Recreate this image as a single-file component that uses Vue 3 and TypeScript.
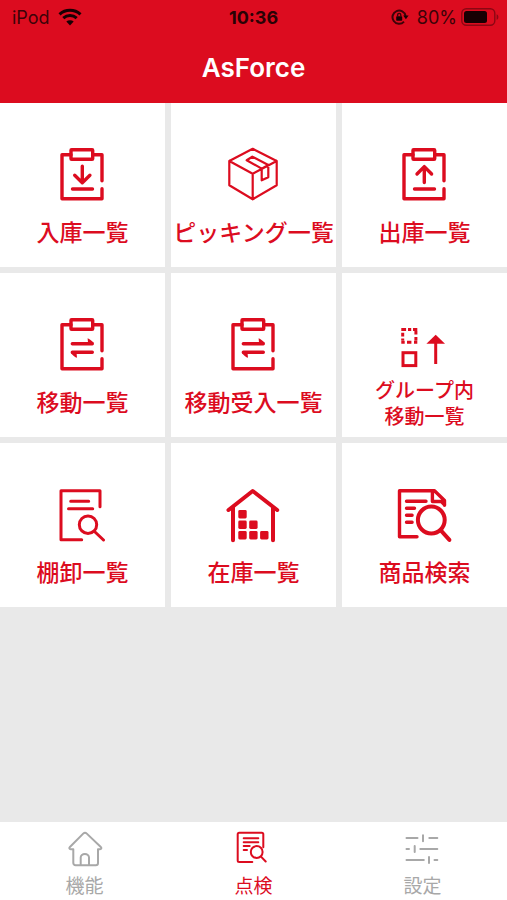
<script setup lang="ts">
import { ref } from 'vue'

type IconName = 'in' | 'box' | 'out' | 'move' | 'group' | 'stocktake' | 'warehouse' | 'product'
type TabName = 'home' | 'inspect' | 'settings'

interface Tile {
  icon: IconName
  lines: string[]
}

interface Tab {
  id: TabName
  label: string
}

const tiles: Tile[] = [
  { icon: 'in', lines: ['入庫一覧'] },
  { icon: 'box', lines: ['ピッキング一覧'] },
  { icon: 'out', lines: ['出庫一覧'] },
  { icon: 'move', lines: ['移動一覧'] },
  { icon: 'move', lines: ['移動受入一覧'] },
  { icon: 'group', lines: ['グループ内', '移動一覧'] },
  { icon: 'stocktake', lines: ['棚卸一覧'] },
  { icon: 'warehouse', lines: ['在庫一覧'] },
  { icon: 'product', lines: ['商品検索'] },
]

const tabs: Tab[] = [
  { id: 'home', label: '機能' },
  { id: 'inspect', label: '点検' },
  { id: 'settings', label: '設定' },
]

const activeTab = ref<TabName>('inspect')

const isClipboard = (icon: IconName): boolean => icon === 'in' || icon === 'out' || icon === 'move'
</script>

<template>
  <div class="app">
    <header class="header">
      <div class="status">
        <div class="status-side">
          <span>iPod</span>
          <svg class="wifi" viewBox="0 0 24 18" aria-hidden="true">
            <path d="M1.5 6.4a15.5 15.5 0 0 1 21 0" />
            <path d="M5.3 10.2a10 10 0 0 1 13.4 0" />
            <path class="solid" d="M12 17.4l-3.7-3.8a5.4 5.4 0 0 1 7.4 0z" />
          </svg>
        </div>
        <span class="time">10:36</span>
        <div class="status-side status-right">
          <svg class="lock" viewBox="0 0 18 18" aria-hidden="true">
            <path d="M13 13.600A6.600 6.600 0 1 1 14.600 8" />
            <path class="solid" d="M12.200 7.600h5.400l-2.700 3.600z" />
            <rect class="solid" x="5.2" y="8.2" width="6" height="4.6" rx="0.8" />
            <path class="shackle" d="M6.600 8.400V7a1.600 1.600 0 0 1 3.200 0v1.400" />
          </svg>
          <span class="percent">80%</span>
          <svg class="battery" viewBox="0 0 38 18" aria-hidden="true">
            <rect class="case" x="0.8" y="0.8" width="33" height="16.4" rx="4.5" />
            <rect class="solid" x="3" y="3" width="23" height="12" rx="2.5" />
            <path class="nub" d="M35.6 6.2c2.4.8 2.4 4.8 0 5.6z" />
          </svg>
        </div>
      </div>
      <h1 class="title">AsForce</h1>
    </header>

    <main class="content">
      <div class="grid">
        <button
          v-for="tile in tiles"
          :key="tile.lines.join('')"
          type="button"
          class="tile"
        >
          <svg class="tile-icon" viewBox="0 0 57 57" aria-hidden="true">
            <g v-if="isClipboard(tile.icon)">
              <path d="M17 8.7H8v44h40v-10M48 34.7v-26h-9.3" />
              <rect x="17" y="3.7" width="21.7" height="9.6" rx="0.6" />
            </g>
            <path
              v-if="tile.icon === 'in'"
              d="M28.3 20.3v16.2M20.7 29.3l7.6 7.4 7.6-7.4M18.5 43h20"
            />
            <path
              v-else-if="tile.icon === 'out'"
              d="M28.3 36.5V20.6M21 28l7.3-7.4 7.3 7.4M18.5 43h20"
            />
            <g v-else-if="tile.icon === 'move'">
              <path d="M18.3 27.7h20M18.3 36.3h20" />
              <path class="solid" d="M33.6 22.2c1.8.4 4.8 3.1 6 4.6l-1.4 1.8h-4z" />
              <path class="solid" d="M23 41.8c-1.8-.4-4.8-3.1-6-4.6l1.4-1.8h4z" />
            </g>
            <path
              v-else-if="tile.icon === 'box'"
              class="thin"
              d="M27.7 2.8l24 12.2v24.3l-24 14-23.4-14V15zM4.3 15l23.4 12.7L51.7 15M27.7 27.7v25.6M36.7 22.6l-15-8.3 5.6-3.6 16 8.2v12.3l-6.6 3.1V22.6l6.6-3.7"
            />
            <g v-else-if="tile.icon === 'group'" class="square">
              <path
                d="M5.3 13.4h4.8M12 13.4h3.2M17 13.4h4.3M5.3 26.2h3.4M11 26.2h4.4M18 26.2h3.3M6.7 16.8v3.6M6.7 22.4v2M19.9 15v3.6M19.9 21v3.4"
              />
              <rect x="7" y="36.7" width="12.8" height="12.9" />
              <path d="M39.7 48V26" />
              <path class="head" d="M39.7 18.7l9.3 9H30.4z" />
            </g>
            <g v-else-if="tile.icon === 'stocktake'" class="medium">
              <path d="M27.7 53.7H7v-49h39v16M16.7 15.3h18M14.5 22.7h24.2M40.5 45.5l9 8.5" />
              <circle cx="34" cy="38.7" r="8.7" />
            </g>
            <g v-else-if="tile.icon === 'warehouse'">
              <path class="bold" d="M3.5 24L27.7 5l24.5 19M8 21.5v32.8M48 21.5v32.8" />
              <g class="solid">
                <rect x="13.3" y="24" width="8.4" height="8.4" rx="1.4" />
                <rect x="13.3" y="34.5" width="8.4" height="8.4" rx="1.4" />
                <rect x="24.2" y="34.5" width="8.4" height="8.4" rx="1.4" />
                <rect x="13.3" y="45" width="8.4" height="8.4" rx="1.4" />
                <rect x="24.2" y="45" width="8.4" height="8.4" rx="1.4" />
                <rect x="35.1" y="45" width="8.4" height="8.4" rx="1.4" />
              </g>
            </g>
            <g v-else>
              <path
                d="M21 50.7H3.5v-46h35l10 9.8v4.8M36.4 5.5v10h9l3.1 3.4M10.5 15.3h19.5M10.5 22.3h8M10.5 29.3h5.6M10.5 36.3h5.6"
              />
              <circle class="bold" cx="35.3" cy="34" r="13.4" />
              <path class="bold" d="M44.8 44.3l8.6 9.6" />
            </g>
          </svg>
          <span class="tile-label" :class="{ stacked: tile.lines.length > 1 }">
            <span v-for="line in tile.lines" :key="line" class="line">{{ line }}</span>
          </span>
        </button>
      </div>
    </main>

    <nav class="tabs">
      <button
        v-for="tab in tabs"
        :key="tab.id"
        type="button"
        class="tab"
        :class="{ active: tab.id === activeTab }"
        @click="activeTab = tab.id"
      >
        <svg class="tab-icon" viewBox="0 0 37 37" aria-hidden="true">
          <path
            v-if="tab.id === 'home'"
            d="M17.2 3.6a2.6 2.6 0 0 1 3.6 0L34.8 17c1 1 .6 2.2-.8 2.2h-2V33a2.2 2.2 0 0 1-2.2 2.2H9.5A2.2 2.2 0 0 1 7.3 33V19.2H4.7c-1.4 0-1.8-1.2-.8-2.2zM14.7 35v-7.500a4.150 3.500 0 0 1 8.300 0V35"
          />
          <g v-else-if="tab.id === 'inspect'">
            <path
              d="M17.3 32H4.2a1.5 1.5 0 0 1-1.5-1.5V4.2a1.5 1.5 0 0 1 1.5-1.5h22.6a1.5 1.5 0 0 1 1.5 1.5v13M8.7 8.3h14.6M8.7 12.2h14.6M8.7 16.1h6M8.7 20h3.3M26 26.6l4.7 4.9"
            />
            <circle cx="21.7" cy="22" r="5.9" />
          </g>
          <path
            v-else
            d="M2.5 8h11M25.3 8h8M19 5.3v6M2.5 19H5M16.3 19h17M10.7 16v6M2.5 30h17.3M30.5 30h2.8M25 27v6"
          />
        </svg>
        <span class="tab-label">{{ tab.label }}</span>
      </button>
    </nav>
  </div>
</template>

<style>
body {
  margin: 0;
}
</style>

<style scoped>
.app {
  display: flex;
  flex-direction: column;
  min-height: 100vh;
  background: #e9e9e9;
  color: #dc0c1f;
  font-family: Inter, 'Noto Sans CJK JP', sans-serif;
}

.header {
  background: #dc0c1f;
}

.status {
  display: grid;
  grid-template-columns: 1fr auto 1fr;
  align-items: center;
  height: 34px;
  color: #3c0308;
  font-size: 18px;
}

.status-side {
  display: flex;
  align-items: center;
  gap: 8px;
  padding-left: 12px;
}

.status-right {
  justify-content: flex-end;
  padding: 0 8px 0 0;
}

.status svg {
  fill: none;
  stroke: #180003;
}

.status svg .solid {
  fill: #180003;
  stroke: none;
}

.wifi {
  width: 24px;
  height: 18px;
  stroke-width: 3;
}

.time {
  color: #2a0205;
  font-weight: 700;
}

.lock {
  width: 18px;
  height: 18px;
  stroke-width: 2;
}

.status .lock {
  stroke: #3c0308;
}

.lock .shackle {
  stroke-width: 1.4;
}

.percent {
  margin-right: -4px;
}

.battery {
  width: 38px;
  height: 18px;
}

.status .battery .case {
  stroke: #8b0713;
  stroke-width: 1.4;
}

.status .battery .nub {
  fill: #8b0713;
  stroke: none;
}

.title {
  margin: 0;
  padding: 16px 0 17px;
  color: #fff;
  font-size: 26px;
  font-weight: 600;
  line-height: 36px;
  text-align: center;
}

.content {
  flex: 1;
}

.grid {
  display: grid;
  grid-template-columns: repeat(3, minmax(0, 1fr));
  gap: 6px;
}

.tile {
  display: flex;
  flex-direction: column;
  align-items: center;
  min-height: 164px;
  padding: 43px 0 0;
  border: 0;
  background: #fff;
  color: inherit;
  font: inherit;
  cursor: pointer;
}

.tile-icon {
  width: 57px;
  height: 57px;
  fill: none;
  stroke: currentColor;
  stroke-width: 3.4;
  stroke-linecap: round;
  stroke-linejoin: round;
}

.tile-icon .thin {
  stroke-width: 2.2;
}

.tile-icon .medium {
  stroke-width: 3;
}

.tile-icon .bold {
  stroke-width: 4;
}

.tile-icon .solid,
.tile-icon .head {
  fill: currentColor;
  stroke: none;
}

.tile-icon .square {
  stroke-width: 3;
  stroke-linecap: butt;
  stroke-linejoin: miter;
}

.tile-label {
  margin-top: 14px;
  font-size: 23px;
  font-weight: 500;
  line-height: 32px;
  white-space: nowrap;
}

.tile-label.stacked {
  margin-top: 5px;
  font-size: 20px;
  line-height: 26px;
}

.line {
  display: block;
}

.tabs {
  display: grid;
  grid-template-columns: repeat(3, 1fr);
  height: 78px;
  background: #fff;
}

.tab {
  display: flex;
  flex-direction: column;
  align-items: center;
  gap: 7px;
  padding: 8px 0 0;
  border: 0;
  background: none;
  color: #a8a8a8;
  font: inherit;
  cursor: pointer;
}

.tab.active {
  color: #dc0c1f;
}

.tab-icon {
  width: 37px;
  height: 37px;
  fill: none;
  stroke: currentColor;
  stroke-width: 2;
  stroke-linecap: round;
  stroke-linejoin: round;
}

.tab-label {
  font-size: 19px;
  line-height: 26px;
}
</style>
